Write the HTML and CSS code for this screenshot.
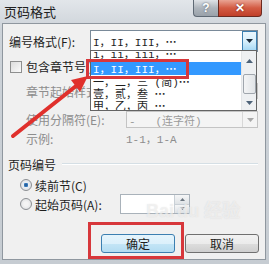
FILE: index.html
```html
<!DOCTYPE html>
<html lang="zh-CN">
<head>
    <meta charset="UTF-8">
    <title>页码格式</title>
    <link rel="stylesheet" href="styles.css">
</head>
<body>
    <div class="window">
        <div class="titlebar">
            <span class="title">页码格式</span>
            <div class="caption-btns">
                <span class="cap-help">?</span>
                <span class="cap-close">✕</span>
            </div>
        </div>

        <div class="client">
            <div class="row row-format">
                <span class="lbl-format">编号格式(F):</span>
                <div class="combo combo-hot">
                    <span class="combo-text">I，II，III，<span class="ell">…</span></span>
                    <span class="combo-btn hot">
                        <svg width="7" height="4" viewBox="0 0 7 4"><path d="M0 0h7L3.5 4z" fill="#1b2a3a"/></svg>
                    </span>
                </div>
            </div>

            <div class="row row-check">
                <span class="checkbox"></span>
                <span>包含章节号(N)</span>
            </div>

            <div class="row row-sub row-style">
                <span class="lbl-sub">章节起始样式(P):</span>
                <div class="combo combo-off"><span class="combo-text">标题 1</span></div>
            </div>

            <div class="row row-sub row-sep">
                <span class="lbl-sub">使用分隔符(E):</span>
                <div class="combo combo-off">
                    <span class="combo-text">-&nbsp;&nbsp;&nbsp;(连字符)</span>
                    <span class="combo-btn off">
                        <svg width="7" height="4" viewBox="0 0 7 4"><path d="M0 0h7L3.5 4z" fill="#a8a8a8"/></svg>
                    </span>
                </div>
            </div>

            <div class="row row-sub row-sample">
                <span class="lbl-sub">示例:</span>
                <span class="sample">1-1，1-A</span>
            </div>

            <div class="group">
                <span class="group-title">页码编号</span>
                <span class="group-line"></span>
            </div>

            <div class="row radio-row radio-first">
                <span class="radio checked"></span>
                <span>续前节(C)</span>
            </div>

            <div class="row radio-row radio-second">
                <span class="radio"></span>
                <span class="lbl-start">起始页码(A):</span>
                <div class="spin">
                    <span class="spin-field"></span>
                    <span class="spin-btns">
                        <span class="spin-up"><svg width="5" height="3" viewBox="0 0 5 3"><path d="M0 3h5L2.5 0z" fill="#6d7781"/></svg></span>
                        <span class="spin-down"><svg width="5" height="3" viewBox="0 0 5 3"><path d="M0 0h5L2.5 3z" fill="#6d7781"/></svg></span>
                    </span>
                </div>
            </div>

            <div class="buttons">
                <button class="btn btn-default">确定</button>
                <button class="btn">取消</button>
            </div>
        </div>

        <!-- open list of the format combo -->
        <div class="dropdown">
            <div class="list">
                <div class="item item-cut">i，ii，iii，<span class="ell">…</span></div>
                <div class="item selected">I，II，III，<span class="ell">…</span></div>
                <div class="item">一，二，三 (简)<span class="ell">…</span></div>
                <div class="item">壹，贰，叁 <span class="ell">…</span></div>
                <div class="item">甲，乙，丙 <span class="ell">…</span></div>
            </div>
            <div class="vscroll">
                <span class="sc-arrow"><svg width="7" height="4" viewBox="0 0 7 4"><path d="M0 4h7L3.5 0z" fill="#4d6278"/></svg></span>
                <span class="sc-thumb"></span>
                <span class="sc-arrow sc-down"><svg width="7" height="4" viewBox="0 0 7 4"><path d="M0 0h7L3.5 4z" fill="#4d6278"/></svg></span>
            </div>
        </div>

        <div class="watermark">Bai<span class="wm-du">du</span> 经验</div>

        <div class="mark mark-item"></div>
        <div class="mark mark-ok"></div>
        <svg class="arrow" width="269" height="264" viewBox="0 0 269 264">
            <path d="M13 136 L76 86" stroke="#e0302c" stroke-width="4" stroke-linecap="round"/>
            <path d="M88 76 L80 92 L71 80 Z" fill="#e0302c"/>
        </svg>
    </div>
</body>
</html>
```

FILE: styles.css
```css
* {
    box-sizing: border-box;
}
body {
    margin: 0;
    font-family: "Noto Sans CJK SC", "Liberation Sans", sans-serif;
    font-size: 12px;
    color: #1e1e1e;
}
.window {
    position: relative;
    width: 269px;
    height: 264px;
    overflow: hidden;
    background: linear-gradient(#e2e6ea, #cdd3d9 30px, #c6ccd2);
    display: flex;
    flex-direction: column;
}
.titlebar {
    height: 23px;
    display: flex;
    align-items: flex-start;
    justify-content: space-between;
    padding-left: 4px;
}
.title {
    font-size: 13px;
    line-height: 13px;
    margin-top: 5px;
    color: #202020;
}
.caption-btns {
    display: flex;
    margin-right: 7px;
}
.cap-help, .cap-close {
    height: 17px;
    display: flex;
    align-items: center;
    justify-content: center;
    border: 1px solid #5f6a75;
    border-top: none;
    font-family: "Liberation Sans", sans-serif;
    font-weight: bold;
    color: #fff;
}
.cap-help {
    width: 25px;
    border-radius: 0 0 0 4px;
    border-right: none;
    background: linear-gradient(#dfe3e7, #aeb5bc 50%, #9aa2aa);
    font-size: 12px;
    text-shadow: 0 0 2px #4b5560;
}
.cap-close {
    width: 44px;
    border-radius: 0 0 4px 0;
    border-color: #6b2a20;
    background: linear-gradient(#e9a494, #d35b43 50%, #c0402a);
    font-size: 12px;
    text-shadow: 0 0 2px #6b1d10;
}
.client {
    flex: 1;
    margin: 0 3px 4px 2px;
    background: #f0f0f0;
    border: 1px solid #8f979f;
    padding: 6px 7px 0 6px;
    display: flex;
    flex-direction: column;
}
.row {
    display: flex;
    align-items: center;
}
.row-format {
    height: 22px;
}
.lbl-format {
    width: 81px;
}
.combo {
    flex: 1;
    height: 100%;
    display: flex;
    align-items: center;
    background: #fff;
    border: 1px solid #7a8a99;
}
.combo-text {
    flex: 1;
    padding-left: 2px;
    font-family: "Liberation Mono", "Noto Sans CJK SC", monospace;
    font-size: 11px;
    white-space: nowrap;
}
.ell {
    font-family: "Noto Sans CJK SC", sans-serif;
    font-weight: bold;
}
.combo-btn {
    width: 15px;
    height: 100%;
    display: flex;
    align-items: center;
    justify-content: center;
}
.combo-btn.hot {
    border: 1px solid #3c7fb1;
    background: linear-gradient(#eaf6fd, #d9f0fc 50%, #a7d9f5);
}
.combo-btn.off {
    border-left: 1px solid #d8d8d8;
    background: #f4f4f4;
}
.row-check {
    height: 13px;
    margin-top: 8px;
    gap: 4px;
}
.checkbox {
    width: 12px;
    height: 12px;
    margin-left: 1px;
    border: 1px solid #8e8f8f;
    background: linear-gradient(135deg, #dcdcdc, #fbfbfb);
}
.row-sub {
    padding-left: 17px;
    color: #8d8d8d;
}
.lbl-sub {
    width: 100px;
    white-space: nowrap;
}
.row-style {
    height: 16px;
    margin-top: 10px;
}
.row-sep {
    height: 17px;
    margin-top: 12px;
}
.combo-off {
    border-color: #c4c4c4;
    background: #f4f4f4;
    color: #9a9a9a;
}
.row-sample {
    height: 14px;
    margin-top: 3px;
}
.sample {
    font-family: "Liberation Mono", "Noto Sans CJK SC", monospace;
    font-size: 11px;
}
.group {
    height: 14px;
    margin-top: 12px;
    display: flex;
    align-items: center;
    gap: 6px;
    margin-left: -1px;
}
.group-line {
    flex: 1;
    height: 2px;
    border-top: 1px solid #d5dfe5;
    border-bottom: 1px solid #fff;
}
.radio-row {
    padding-left: 11px;
    gap: 3px;
}
.radio-first {
    height: 14px;
    margin-top: 7px;
}
.radio-second {
    height: 20px;
    margin-top: 2px;
}
.radio {
    width: 12px;
    height: 12px;
    border-radius: 50%;
    border: 1px solid #8c8f93;
    background: radial-gradient(circle, #f4f4f4 30%, #d7d9dc);
}
.radio.checked {
    background: radial-gradient(circle, #1f4f86 0, #3a80c4 28%, #e9eef3 36%, #d7d9dc);
}
.lbl-start {
    width: 82px;
}
.spin {
    width: 70px;
    height: 20px;
    display: flex;
    border: 1px solid #a9b2ba;
    background: #fff;
}
.spin-field {
    flex: 1;
}
.spin-btns {
    width: 15px;
    display: flex;
    flex-direction: column;
    border-left: 1px solid #c9d0d6;
}
.spin-up, .spin-down {
    flex: 1;
    display: flex;
    align-items: center;
    justify-content: center;
    background: linear-gradient(#f5f6f7, #dfe3e6);
}
.spin-up {
    border-bottom: 1px solid #c9d0d6;
}
.buttons {
    margin-top: 20px;
    display: flex;
    justify-content: flex-end;
    gap: 10px;
    margin-right: -1px;
}
.btn {
    width: 74px;
    height: 19px;
    padding: 0;
    font-family: inherit;
    font-size: 12px;
    color: #1e1e1e;
    border: 1px solid #707070;
    border-radius: 3px;
    background: linear-gradient(#f2f2f2, #ebebeb 50%, #dddddd 51%, #cfcfcf);
}
.btn-default {
    border-color: #3c7fb1;
    background: linear-gradient(#e5f4fc, #dcf0fb 50%, #c4e5f6 51%, #b3dcf2);
}
.dropdown {
    position: absolute;
    left: 90px;
    top: 50px;
    width: 167px;
    height: 61px;
    border: 1px solid #646464;
    background: #fff;
    display: flex;
    overflow: hidden;
}
.list {
    flex: 1;
    overflow: hidden;
}
.item {
    height: 12px;
    line-height: 12px;
    padding-left: 2px;
    font-family: "Liberation Mono", "Noto Sans CJK SC", monospace;
    font-size: 11px;
    white-space: nowrap;
}
.item-cut {
    margin-top: -1px;
    height: 10px;
    line-height: 6px;
}
.item.selected {
    height: 13px;
    line-height: 13px;
    background: #3399ff;
    color: #fff;
    margin-top: 2px;
}
.vscroll {
    width: 15px;
    display: flex;
    flex-direction: column;
    align-items: center;
    background: #eef0f2;
    border-left: 1px solid #e3e5e7;
}
.sc-arrow {
    height: 15px;
    display: flex;
    align-items: center;
    justify-content: center;
    margin-top: 3px;
}
.sc-thumb {
    width: 13px;
    height: 20px;
    margin-top: 6px;
    border: 1px solid #a0a6ad;
    border-radius: 2px;
    background: linear-gradient(90deg, #f3f4f5, #e1e4e7);
}
.sc-down {
    margin-top: 2px;
}
.watermark {
    position: absolute;
    left: 146px;
    top: 196px;
    font-family: "Liberation Sans", sans-serif;
    font-size: 18px;
    font-weight: bold;
    color: rgba(255, 255, 255, 0.55);
    text-shadow: 0 0 1px rgba(160, 160, 160, 0.35);
}
.wm-du {
    margin-left: 3px;
}
.mark {
    position: absolute;
    border: 3px solid #d7373b;
}
.mark-item {
    left: 86px;
    top: 59px;
    width: 103px;
    height: 20px;
}
.mark-ok {
    left: 88px;
    top: 222px;
    width: 96px;
    height: 37px;
}
.arrow {
    position: absolute;
    left: 0;
    top: 0;
    pointer-events: none;
}
```
